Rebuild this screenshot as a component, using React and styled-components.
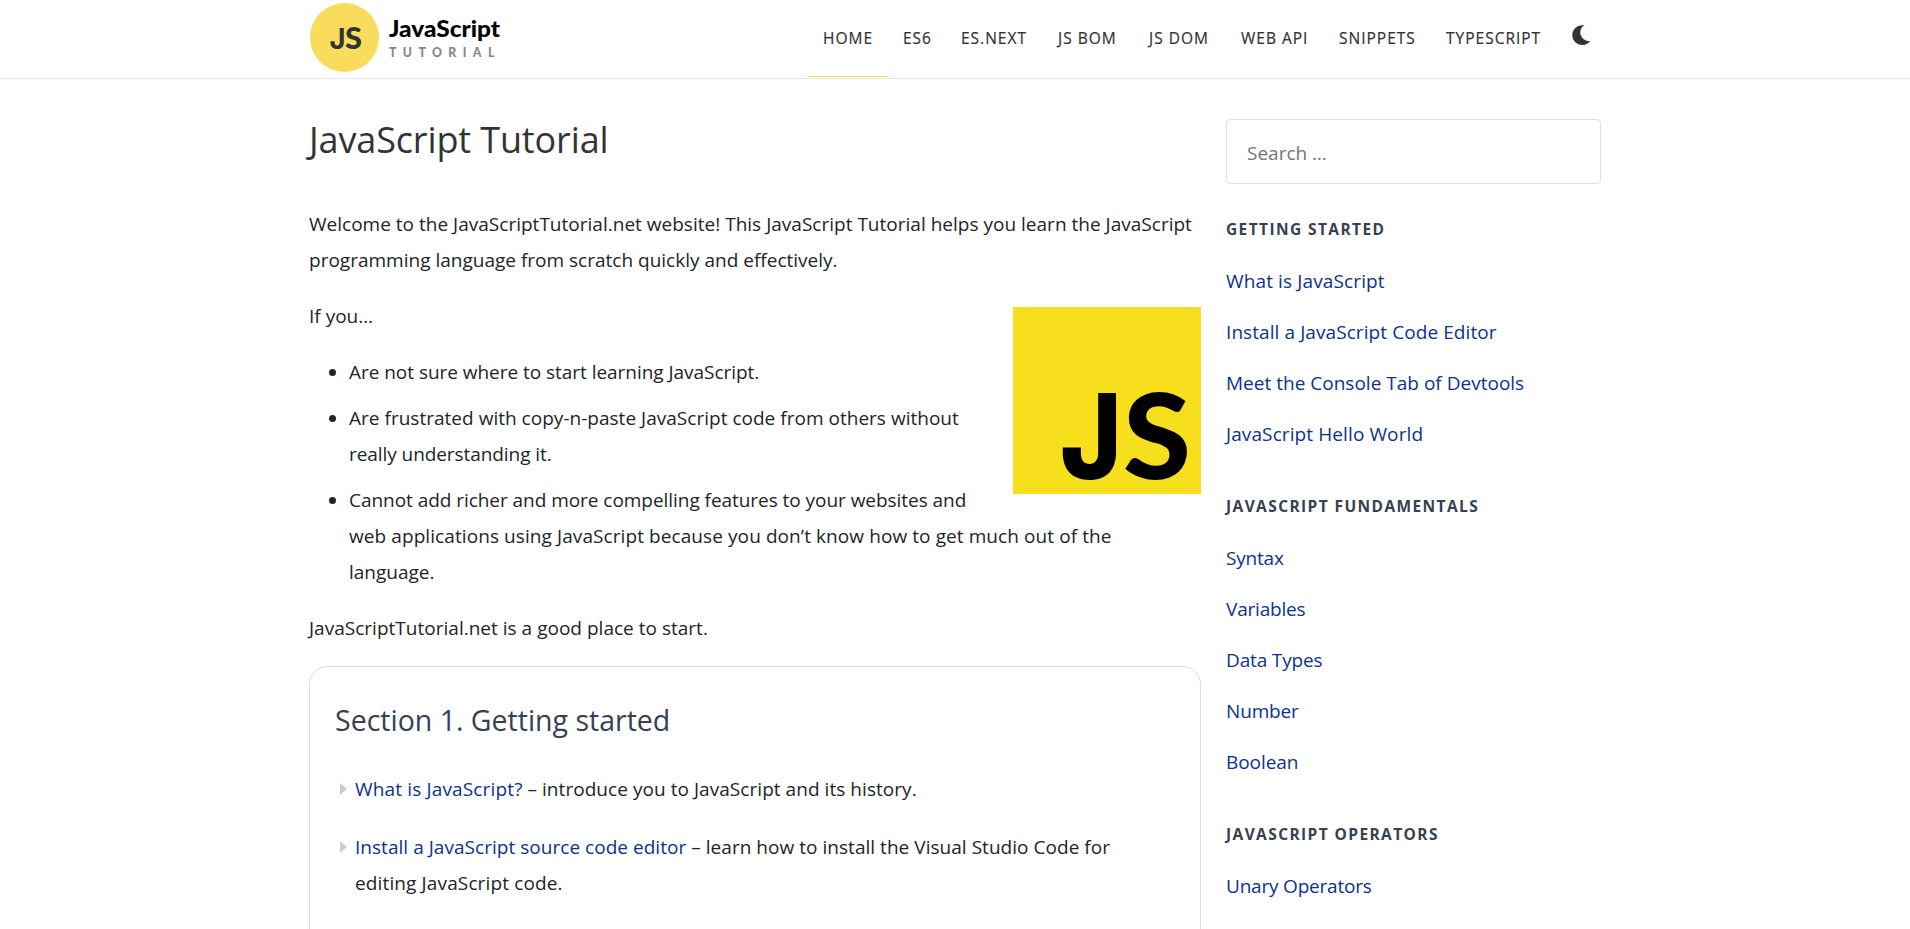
import React from "react";
import styled, { createGlobalStyle } from "styled-components";

const Global = createGlobalStyle`
  *, *::before, *::after { box-sizing: border-box; }
  html, body { margin: 0; height: 929px; overflow: hidden; background: #fff; }
  body {
    font-family: "Open Sans", "Noto Sans", sans-serif;
    font-size: 19px;
    line-height: 36px;
    color: #212529;
  }
`;

const Page = styled.div`
  height: 929px;
  overflow: hidden;
`;

const Header = styled.header`
  height: 79px;
  border-bottom: 1px solid #e6e6e6;
`;

const HeaderInner = styled.div`
  width: 1292px;
  height: 77px;
  margin: 0 auto;
  display: flex;
  justify-content: space-between;
`;

const LogoSvg = styled.svg`
  display: block;
  width: 195px;
  height: 77px;
`;

const Nav = styled.nav`
  display: flex;
`;

const NavItem = styled.a`
  width: ${(p) => p.$w}px;
  height: 77px;
  padding-left: 15px;
  border-bottom: 1px solid ${(p) => (p.$active ? "#fadc4f" : "transparent")};
  font-size: 15.5px;
  line-height: 76px;
  letter-spacing: 1px;
  color: #333;
  -webkit-text-stroke: 0.2px #333;
  white-space: nowrap;
`;

const ThemeToggle = styled.button`
  width: 44px;
  padding: 25px 0 0 15px;
  border: 0;
  background: none;
  display: flex;
  align-items: flex-start;
`;

const Columns = styled.div`
  width: 1292px;
  margin: 0 auto;
  display: flex;
  justify-content: space-between;
`;

const Main = styled.main`
  width: 892px;
  padding-top: 35px;
`;

const Title = styled.h1`
  margin: 0 0 40px;
  font-size: 36px;
  font-weight: 400;
  line-height: 52px;
  letter-spacing: -0.13px;
  color: #333;
`;

const Paragraph = styled.p`
  margin: 0 0 20px;
`;

const Line = styled.span`
  letter-spacing: ${(p) => p.$ls ?? 0}px;
`;

const Badge = styled.svg`
  float: right;
  width: 188px;
  height: 187px;
  margin: 9px 0 15px 30px;
`;

const Bullets = styled.ul`
  margin: 0 0 20px;
  padding: 0 20px 0 40px;

  li + li { margin-top: 10px; }
`;

const Card = styled.section`
  height: 400px;
  padding: 27px 25px;
  border: 1px solid #dcdcdc;
  border-radius: 18px;
`;

const CardTitle = styled.h2`
  margin: 0 0 25px;
  font-size: 28.5px;
  font-weight: 400;
  line-height: 52px;
  color: #374151;
`;

const Lessons = styled.ul`
  margin: 0;
  padding: 0 50px 0 0;
  list-style: none;
`;

const Lesson = styled.li`
  display: flex;
  margin-bottom: 22px;

  &::before {
    content: "";
    flex: none;
    width: 0;
    height: 0;
    margin: 12px 8px 0 5px;
    border: 6px solid transparent;
    border-left: 7px solid #ccc;
    border-right: 0;
  }
`;

const Link = styled.a`
  letter-spacing: ${(p) => p.$ls ?? 0}px;
  color: #0b3291;
`;

const Sidebar = styled.aside`
  width: 375px;
  padding-top: 40px;
`;

const Search = styled.input`
  display: block;
  width: 100%;
  height: 65px;
  padding: 2px 20px 0;
  border: 1px solid #e0e0e0;
  border-radius: 4px;
  outline: 0;
  font: inherit;
  background: #fff;

  &::placeholder { color: #757575; opacity: 1; }
`;

const Group = styled.section`
  margin-top: ${(p) => p.$top}px;
`;

const GroupTitle = styled.h2`
  margin: 0 0 20px;
  font-size: 15.5px;
  font-weight: 700;
  line-height: 28px;
  letter-spacing: 1.4px;
  color: #374151;
`;

const GroupLink = styled.a`
  display: block;
  height: 36px;
  letter-spacing: ${(p) => p.$ls ?? 0}px;
  color: #0b3291;

  & + & { margin-top: 15px; }
`;

function Logo() {
  return (
    <LogoSvg viewBox="0 0 195 77">
      <circle cx="35.5" cy="37.5" r="34.5" fill="#f9dc5c" />
      <g fontFamily="Lato" fill="#333" fontWeight="900">
        <text x="20.5" y="49" fontSize="29" fontFamily="Inter" fontWeight="700" textLength="16" lengthAdjust="spacingAndGlyphs">J</text>
        <text x="36" y="49" fontSize="30" textLength="17" lengthAdjust="spacingAndGlyphs">S</text>
        <text x="80" y="37" fontSize="22.5" fill="#000" textLength="111" lengthAdjust="spacingAndGlyphs">JavaScript</text>
        <text x="80" y="56.5" fontSize="12.3" fill="#888" letterSpacing="6.4">TUTORIAL</text>
      </g>
    </LogoSvg>
  );
}

const nav = [
  ["HOME", 80], ["ES6", 58], ["ES.NEXT", 97], ["JS BOM", 91], ["JS DOM", 92],
  ["WEB API", 98], ["SNIPPETS", 107], ["TYPESCRIPT", 126],
];

const groups = [
  { title: "GETTING STARTED", top: 31, links: [["What is JavaScript", 0.13], ["Install a JavaScript Code Editor", 0.08], ["Meet the Console Tab of Devtools", 0.01], ["JavaScript Hello World", 0.1]] },
  { title: "JAVASCRIPT FUNDAMENTALS", top: 40, links: [["Syntax", -0.2], ["Variables", -0.2], ["Data Types", -0.15], ["Number", -0.15], ["Boolean", -0.05]] },
  { title: "JAVASCRIPT OPERATORS", top: 40, links: [["Unary Operators", -0.2]] },
];

export default function App() {
  return (
    <Page>
      <Global />
      <Header>
        <HeaderInner>
          <Logo />
          <Nav>
            {nav.map(([label, w], i) => (
              <NavItem key={label} $w={w} $active={i === 0}>{label}</NavItem>
            ))}
            <ThemeToggle aria-label="Dark mode">
              <svg width="19" height="20" viewBox="0 0 19 20">
                <path d="M12.6 0.3C8.2 2.6 7.2 7.8 9.4 11.6C11.4 15.1 15.2 16.6 18.3 15.8C16.4 18.6 13.6 20 10.3 20C4.7 20 0.3 15.7 0.3 10.1C0.3 4.3 5-0.7 12.6 0.3Z" fill="#333" />
              </svg>
            </ThemeToggle>
          </Nav>
        </HeaderInner>
      </Header>
      <Columns>
        <Main>
          <Title>JavaScript Tutorial</Title>
          <Paragraph>
            <Line $ls={0.012}>Welcome to the JavaScriptTutorial.net website! This JavaScript Tutorial helps you learn the JavaScript </Line>
            <Line $ls={0.005}>programming language from scratch quickly and effectively.</Line>
          </Paragraph>
          <Badge viewBox="0 0 188 187">
            <rect width="188" height="187" fill="#f7df1e" />
            <g fontWeight="900" fill="#000">
              <text x="47" y="172" fontFamily="Inter" fontWeight="800" fontSize="118" textLength="62" lengthAdjust="spacingAndGlyphs">J</text>
              <text x="110" y="171.5" fontFamily="Lato" fontSize="118" textLength="68" lengthAdjust="spacingAndGlyphs">S</text>
            </g>
          </Badge>
          <Paragraph>If you…</Paragraph>
          <Bullets>
            <li><Line $ls={-0.035}>Are not sure where to start learning JavaScript.</Line></li>
            <li>
              <Line $ls={0.02}>Are frustrated with copy-n-paste JavaScript code from others without </Line>
              <Line $ls={-0.07}>really understanding it.</Line>
            </li>
            <li>
              <Line $ls={-0.045}>Cannot add richer and more compelling features to your websites and </Line>
              <Line $ls={0.085}>web applications using JavaScript because you don’t know how to get much out of the </Line>
              <Line>language.</Line>
            </li>
          </Bullets>
          <Paragraph><Line $ls={0.015}>JavaScriptTutorial.net is a good place to start.</Line></Paragraph>
          <Card>
            <CardTitle>Section 1. Getting started</CardTitle>
            <Lessons>
              <Lesson><Line $ls={0.05}><Link $ls={0.15}>What is JavaScript?</Link> – introduce you to JavaScript and its history.</Line></Lesson>
              <Lesson>
                <div>
                  <Line $ls={0.035}><Link $ls={0.035}>Install a JavaScript source code editor</Link> – learn how to install the Visual Studio Code for </Line>
                  <Line $ls={0.13}>editing JavaScript code.</Line>
                </div>
              </Lesson>
            </Lessons>
          </Card>
        </Main>
        <Sidebar>
          <Search placeholder="Search …" />
          {groups.map((g) => (
            <Group key={g.title} $top={g.top}>
              <GroupTitle>{g.title}</GroupTitle>
              {g.links.map(([t, ls]) => <GroupLink key={t} $ls={ls}>{t}</GroupLink>)}
            </Group>
          ))}
        </Sidebar>
      </Columns>
    </Page>
  );
}
